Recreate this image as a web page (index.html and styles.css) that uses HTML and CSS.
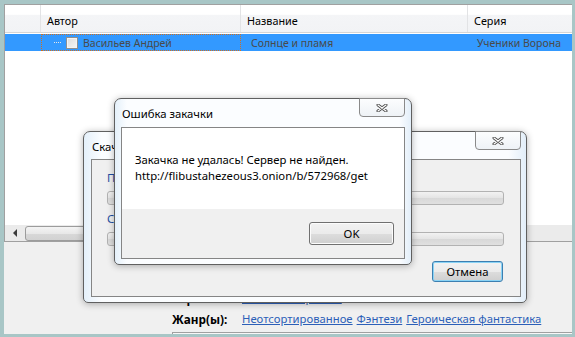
FILE: index.html
```html
<!DOCTYPE html>
<html lang="ru">
<head>
    <meta charset="UTF-8">
    <title>Библиотека</title>
    <link rel="stylesheet" href="styles.css">
</head>
<body>
    <div class="screen">
        <div class="panel">
            <div class="grid">
                <div class="grid-head">
                    <div class="hcell c0"></div>
                    <div class="hcell c1">Автор</div>
                    <div class="hcell c2">Название</div>
                    <div class="hcell c3">Серия</div>
                </div>
                <div class="grid-body">
                    <div class="row selected">
                        <div class="cell c0"></div>
                        <div class="cell c1 focus"><span class="tree-dots"></span><span class="check"></span>Васильев Андрей</div>
                        <div class="cell c2">Солнце и пламя</div>
                        <div class="cell c3">Ученики Ворона</div>
                    </div>
                </div>
                <div class="hscroll">
                    <span class="scroll-btn"><span class="arrow-left"></span></span>
                    <span class="thumb"></span>
                </div>
            </div>
            <div class="details">
                <div class="drow">
                    <span class="dlabel">Серия:</span>
                    <span class="links"><a href="#">Ученики Ворона 1</a></span>
                </div>
                <div class="drow">
                    <span class="dlabel">Жанр(ы):</span>
                    <span class="links"><a href="#">Неотсортированное</a><a href="#">Фэнтези</a><a href="#">Героическая фантастика</a></span>
                </div>
                <div class="dbox"></div>
            </div>
        </div>

        <div class="win win-download">
            <div class="titlebar">
                <span class="title">Скачивание</span>
                <span class="close">
                    <svg width="12" height="8" viewBox="0 0 12 8"><path d="M2 1 L10 7 M10 1 L2 7" stroke="#4d4d4d" stroke-width="3" stroke-linecap="round"/><path d="M2 1 L10 7 M10 1 L2 7" stroke="#fff" stroke-width="1.2" stroke-linecap="round"/></svg>
                </span>
            </div>
            <div class="client client-download">
                <div class="plabel">Прогресс:</div>
                <div class="pbar"></div>
                <div class="plabel gap">Скорость:</div>
                <div class="pbar"></div>
                <button class="btn btn-default">Отмена</button>
            </div>
        </div>

        <div class="win win-error">
            <div class="titlebar">
                <span class="title">Ошибка закачки</span>
                <span class="close">
                    <svg width="12" height="8" viewBox="0 0 12 8"><path d="M2 1 L10 7 M10 1 L2 7" stroke="#4d4d4d" stroke-width="3" stroke-linecap="round"/><path d="M2 1 L10 7 M10 1 L2 7" stroke="#fff" stroke-width="1.2" stroke-linecap="round"/></svg>
                </span>
            </div>
            <div class="client client-error">
                <div class="msg">Закачка не удалась! Сервер не найден.<br>http://flibustahezeous3.onion/b/572968/get</div>
                <div class="actions">
                    <button class="btn btn-ok">OK</button>
                </div>
            </div>
        </div>
    </div>
</body>
</html>
```

FILE: styles.css
```css
body {
    margin: 0;
    font-family: "Noto Sans", sans-serif;
    font-size: 11.3px;
    color: #000;
}
.screen {
    width: 575px;
    height: 337px;
    box-sizing: border-box;
    padding: 4px 3px 3px 4px;
    background: #a8c6c6;
    position: relative;
    overflow: hidden;
}
.panel {
    height: 100%;
    background: #f0f0f0;
    display: flex;
    flex-direction: column;
}

/* list */
.grid {
    height: 238px;
    box-sizing: border-box;
    border: 1px solid #a0a0a0;
    border-right: none;
    background: #fff;
    display: flex;
    flex-direction: column;
    font-size: 10.5px;
}
.grid-head {
    display: flex;
    height: 28px;
    box-sizing: border-box;
    border-bottom: 1px solid #d5d5d5;
    background: linear-gradient(#ffffff, #ffffff 35%, #f4f5f7 36%, #f2f3f5);
}
.hcell {
    box-sizing: border-box;
    border-right: 1px solid #e2e3e5;
    padding: 8px 0 0 6px;
    font-size: 10.8px;
}
.c0 { width: 36px; }
.c1 { width: 200px; }
.c2 { width: 227px; }
.c3 { flex: 1; border-right: none; }
.grid-body {
    flex: 1;
    padding-top: 1px;
}
.row {
    display: flex;
    height: 17px;
}
.row.selected {
    background: #3399ff;
    color: #4a4a4a;
}
.cell {
    box-sizing: border-box;
    display: flex;
    align-items: center;
    white-space: nowrap;
}
.cell.c2 { padding-left: 10px; }
.cell.c3 { padding-left: 9px; }
.cell.focus {
    border: 1px dotted #d07020;
    padding-left: 12px;
}
.tree-dots {
    width: 7px;
    border-top: 1px dotted #e8e8e8;
}
.check {
    width: 12px;
    height: 12px;
    box-sizing: border-box;
    margin: 0 5px;
    border: 1px solid #8e8f8f;
    background: linear-gradient(135deg, #dcdcdc, #f6f6f6);
    box-shadow: inset 0 0 0 1px #f4f4f4;
}
.hscroll {
    height: 16px;
    display: flex;
    align-items: center;
    background: #ebebeb;
}
.scroll-btn {
    width: 19px;
    height: 16px;
    display: flex;
    align-items: center;
    justify-content: center;
}
.arrow-left {
    width: 0;
    height: 0;
    border-top: 4px solid transparent;
    border-bottom: 4px solid transparent;
    border-right: 4px solid #3c3c3c;
}
.thumb {
    margin-left: 1px;
    width: 300px;
    height: 15px;
    box-sizing: border-box;
    border: 1px solid #9c9c9c;
    border-radius: 3px;
    background: linear-gradient(#f4f4f4, #e8e8e8 50%, #d8d8d8 51%, #d2d2d2);
}

/* details under list */
.details {
    flex: 1;
    box-sizing: border-box;
    padding: 48px 0 0 168px;
    display: flex;
    flex-direction: column;
}
.drow {
    display: flex;
    height: 16px;
    line-height: 16px;
    white-space: nowrap;
}
.drow + .drow {
    margin-top: 5px;
}
.dlabel {
    width: 70px;
    font-weight: bold;
    font-size: 11.8px;
}
.links {
    display: flex;
    gap: 4px;
}
.links a {
    color: #2c5fb8;
    text-decoration: underline;
}
.dbox {
    flex: 1;
    margin-top: 5px;
    border-top: 1px solid #a0a0a0;
    border-left: 1px solid #a0a0a0;
    background: #f7f7f7;
}

/* dialog windows */
.win {
    position: absolute;
    box-sizing: border-box;
    border: 1px solid #606060;
    border-radius: 7px 7px 5px 5px;
    background: linear-gradient(90deg, #e4f0fa, #fbfdff 4%, #fbfdff 96%, #e2eef9);
    box-shadow: 0 1px 7px rgba(0, 0, 0, 0.3);
    display: flex;
    flex-direction: column;
}
.win-download {
    left: 83px;
    top: 131px;
    width: 444px;
    height: 172px;
    padding: 0 5px 5px 7px;
}
.win-error {
    left: 114px;
    top: 98px;
    width: 298px;
    height: 167px;
    padding: 0 6px 5px 6px;
}
.titlebar {
    display: flex;
    align-items: center;
    height: 27px;
    flex-shrink: 0;
}
.win-error .titlebar {
    height: 28px;
}
.title {
    padding-left: 1px;
    padding-top: 1px;
}
.close {
    margin-left: auto;
    align-self: flex-start;
    margin-top: -1px;
    width: 46px;
    height: 19px;
    box-sizing: border-box;
    border: 1px solid #8a8a8a;
    border-radius: 0 0 4px 4px;
    background: linear-gradient(#fcfdfe, #eef2f6);
    display: flex;
    align-items: center;
    justify-content: center;
}
.client {
    flex: 1;
    border: 1px solid #858585;
    background: #f0f0f0;
    display: flex;
    flex-direction: column;
}
.client-download {
    padding: 10px 16px 0 15px;
}
.plabel {
    line-height: 16px;
    color: #1e4fa3;
    white-space: nowrap;
}
.plabel.gap {
    margin-top: 6px;
}
.pbar {
    margin-top: 5px;
    height: 14px;
    box-sizing: border-box;
    border: 1px solid #b2b2b2;
    border-radius: 3px;
    background: linear-gradient(#f2f2f2, #e4e4e4 50%, #d8d8d8 51%, #e0e0e0);
}
.btn {
    font: inherit;
    color: #000;
    box-sizing: border-box;
    border: 1px solid #707070;
    border-radius: 3px;
    background: linear-gradient(#f2f2f2, #ebebeb 50%, #dddddd 51%, #cfcfcf);
    box-shadow: inset 0 0 0 1px #fcfcfc;
    padding: 0;
}
.btn-default {
    align-self: flex-end;
    margin-top: 15px;
    margin-right: 1px;
    width: 71px;
    height: 21px;
    border-color: #3c7fb1;
    box-shadow: inset 0 0 0 1px #8ad3f5;
}
.msg {
    background: #fff;
    padding: 24px 13px 25px;
    line-height: 16px;
    white-space: nowrap;
}
.actions {
    flex: 1;
    display: flex;
    justify-content: flex-end;
    align-items: flex-start;
    padding: 13px 10px 0 0;
}
.btn-ok {
    width: 85px;
    height: 23px;
}
```
